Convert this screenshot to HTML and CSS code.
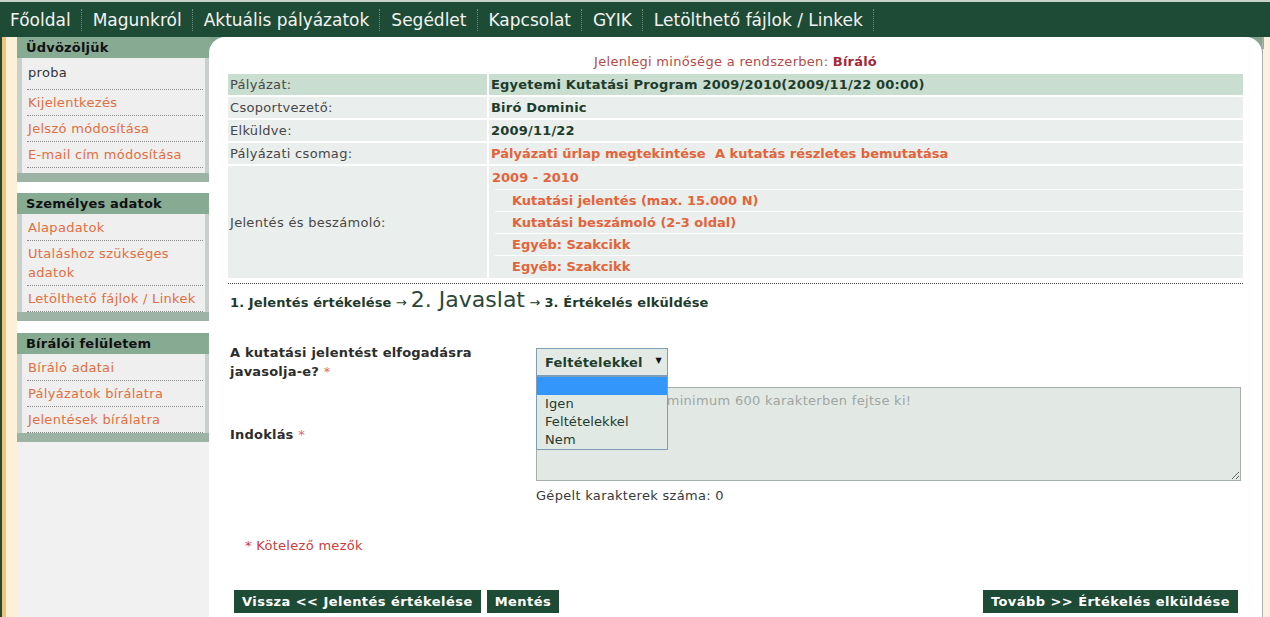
FILE: index.html
```html
<!DOCTYPE html>
<html lang="hu">
<head>
<meta charset="utf-8">
<title>Javaslat</title>
<link rel="stylesheet" href="styles.css">
</head>
<body>
<div class="topline"></div>
<nav class="nav">
  <a href="#">Főoldal</a>
  <a href="#">Magunkról</a>
  <a href="#">Aktuális pályázatok</a>
  <a href="#">Segédlet</a>
  <a href="#">Kapcsolat</a>
  <a href="#">GYIK</a>
  <a href="#">Letölthető fájlok / Linkek</a>
</nav>
<div class="page">
  <aside class="sidebar">
    <section class="box">
      <h3 class="box-head">Üdvözöljük</h3>
      <div class="box-body welcome">
        <p class="user">proba</p>
        <ul>
          <li><a href="#">Kijelentkezés</a></li>
          <li><a href="#">Jelszó módosítása</a></li>
          <li><a href="#">E-mail cím módosítása</a></li>
        </ul>
      </div>
      <div class="box-foot"></div>
    </section>
    <section class="box">
      <h3 class="box-head">Személyes adatok</h3>
      <div class="box-body">
        <ul>
          <li><a href="#">Alapadatok</a></li>
          <li><a href="#">Utaláshoz szükséges adatok</a></li>
          <li><a href="#">Letölthető fájlok / Linkek</a></li>
        </ul>
      </div>
      <div class="box-foot"></div>
    </section>
    <section class="box">
      <h3 class="box-head">Bírálói felületem</h3>
      <div class="box-body">
        <ul>
          <li><a href="#">Bíráló adatai</a></li>
          <li><a href="#">Pályázatok bírálatra</a></li>
          <li><a href="#">Jelentések bírálatra</a></li>
        </ul>
      </div>
      <div class="box-foot"></div>
    </section>
    <div class="sidebar-fill"></div>
  </aside>

  <div class="main-col">
    <main class="main">
      <p class="role">Jelenlegi minősége a rendszerben: <b>Bíráló</b></p>
      <table class="info">
        <tr class="hl">
          <td class="lbl">Pályázat:</td>
          <td class="val">Egyetemi Kutatási Program 2009/2010(2009/11/22 00:00)</td>
        </tr>
        <tr>
          <td class="lbl">Csoportvezető:</td>
          <td class="val">Biró Dominic</td>
        </tr>
        <tr>
          <td class="lbl">Elküldve:</td>
          <td class="val">2009/11/22</td>
        </tr>
        <tr>
          <td class="lbl">Pályázati csomag:</td>
          <td class="val"><a class="olink" href="#">Pályázati űrlap megtekintése</a>&nbsp; <a class="olink" href="#">A kutatás részletes bemutatása</a></td>
        </tr>
        <tr>
          <td class="lbl">Jelentés és beszámoló:</td>
          <td class="val report">
            <div class="year"><a class="olink" href="#">2009 - 2010</a></div>
            <div class="item"><a class="olink" href="#">Kutatási jelentés (max. 15.000 N)</a></div>
            <div class="item"><a class="olink" href="#">Kutatási beszámoló (2-3 oldal)</a></div>
            <div class="item"><a class="olink" href="#">Egyéb: Szakcikk</a></div>
            <div class="item"><a class="olink" href="#">Egyéb: Szakcikk</a></div>
          </td>
        </tr>
      </table>

      <div class="steps">
        <span class="step">1. Jelentés értékelése</span> <span class="arr">→</span> <span class="step-cur">2. Javaslat</span> <span class="arr">→</span> <span class="step">3. Értékelés elküldése</span>
      </div>

      <form class="form">
        <div class="frow">
          <label class="flabel">A kutatási jelentést elfogadásra javasolja-e?&nbsp;<span class="req">*</span></label>
          <div class="field">
            <div class="select">
              <span class="select-val">Feltételekkel</span>
              <span class="select-arrow">▼</span>
              <ul class="options">
                <li class="opt active">&nbsp;</li>
                <li class="opt">Igen</li>
                <li class="opt">Feltételekkel</li>
                <li class="opt">Nem</li>
              </ul>
            </div>
          </div>
        </div>
        <div class="frow">
          <label class="flabel">Indoklás&nbsp;<span class="req">*</span></label>
          <div class="field">
            <textarea class="tarea" placeholder="Kérjük, indoklását minimum 600 karakterben fejtse ki!"></textarea>
          </div>
        </div>
        <div class="frow frow-counter">
          <div class="flabel"></div>
          <div class="field counter">Gépelt karakterek száma: 0</div>
        </div>
        <p class="required-note">* Kötelező mezők</p>
        <div class="buttons">
          <div class="btn-group">
            <button type="button" class="btn">Vissza &lt;&lt; Jelentés értékelése</button>
            <button type="button" class="btn">Mentés</button>
          </div>
          <button type="button" class="btn">Tovább &gt;&gt; Értékelés elküldése</button>
        </div>
      </form>
    </main>
  </div>
  <div class="right-edge"></div>
</div>
</body>
</html>
```

FILE: styles.css
```css
* { box-sizing: border-box; }

html, body {
  margin: 0;
  padding: 0;
}

body {
  font-family: "DejaVu Sans", Verdana, sans-serif;
  font-size: 13px;
  letter-spacing: 0.3px;
  color: #333;
  background: #fcf0d9;
  height: 617px;
  overflow: hidden;
}

b, strong { letter-spacing: 0.2px; }

a { text-decoration: none; }

.topline {
  height: 2px;
  background: #c9d3cc;
}

.nav {
  height: 35px;
  background: #1e4b35;
  display: flex;
  align-items: center;
  padding-left: 10px;
}

.nav a {
  color: #f3f3f3;
  font-size: 17px;
  letter-spacing: 0;
  line-height: 22px;
  padding: 0 10px 0 11px;
  border-right: 1px dotted #6e8c7c;
}

.nav a:first-child { padding-left: 0; }

.page {
  display: flex;
  height: 580px;
  padding-left: 17px;
  background: linear-gradient(to right, #1e4b35 0 2px, #f0c57a 2px 6px, #fcf0d9 6px 17px);
}

/* Sidebar */
.sidebar {
  width: 192px;
  flex: none;
  display: flex;
  flex-direction: column;
  background: #fff;
}

.box { margin-bottom: 11px; }
.box:nth-child(2) { margin-bottom: 12px; }
.box:nth-child(3) { margin-bottom: 0; }

.box-head {
  margin: 0;
  height: 21px;
  line-height: 21px;
  padding-left: 9px;
  background: #87aa93;
  color: #111;
  font-size: 13px;
  font-weight: bold;
  letter-spacing: 0.2px;
}

.box-body {
  background: #efefef;
  border-left: 5px solid #c7d0ca;
  border-right: 4px solid #c7d0ca;
  padding-top: 1px;
}

.box-body.welcome { padding-top: 0; padding-bottom: 5px; }

.box-body ul {
  list-style: none;
  margin: 0;
  padding: 0;
}

.box-body li,
.user {
  margin: 0 2px 0 5px;
  padding: 3px 0 3px 1px;
  line-height: 19px;
  border-bottom: 1px dotted #8a8a8a;
}

.user {
  color: #333;
  padding-top: 5px;
  padding-bottom: 7px;
}

.box-body a { color: #e26e40; }

.box-foot {
  height: 9px;
  background: #9db3a5;
}

.sidebar-fill {
  flex: 1;
  background: #f1f1f1;
}

/* Main */
.main-col {
  flex: 1;
  min-width: 0;
  background: linear-gradient(#7fa38c, #8eb09a) top left / 100% 20px no-repeat;
}

.main {
  background: #fff;
  height: 100%;
  border-radius: 16px 16px 0 0;
  padding: 16px 17px 0 17px;
}

.role {
  margin: 0 0 2px;
  text-align: center;
  line-height: 17px;
  color: #b34a48;
}

.role b { color: #a3283a; }

.info {
  width: 100%;
  border-collapse: separate;
  border-spacing: 2px;
}

.info td {
  background: #eaeeec;
  height: 21px;
  line-height: 21px;
  padding: 0 2px;
  vertical-align: middle;
}

.info tr.hl td { background: #c9ddd0; }

.info .lbl {
  width: 259px;
  color: #474747;
}

.info .val {
  font-weight: bold;
  letter-spacing: 0.2px;
  color: #1d3b2b;
}

.olink { color: #e2643a; font-weight: bold; letter-spacing: 0; }

.info .report {
  padding: 1px 0;
}

.report .year {
  height: 22px;
  line-height: 22px;
  padding-left: 3px;
}

.report .item {
  height: 22px;
  line-height: 21px;
  padding-left: 17px;
  border-top: 1px solid #fff;
  margin-left: 6px;
}

.report .item:first-of-type { border-top-color: transparent; }

.steps {
  margin: 3px 2px 0;
  border-top: 1px dotted #444;
  padding: 2px 2px 0;
  line-height: 28px;
  color: #1e3a2c;
  letter-spacing: 0.1px;
}

.step { font-weight: bold; }
.arr { font-size: 13px; }

.step-cur {
  font-size: 22px;
  letter-spacing: 0;
  color: #2a473a;
}

/* Form */
.form {
  margin: 26px 2px 0;
}

.frow {
  display: flex;
  align-items: center;
  margin-bottom: 6px;
}

.flabel {
  width: 308px;
  flex: none;
  padding-left: 2px;
  padding-right: 40px;
  font-weight: bold;
  letter-spacing: 0.2px;
  color: #2d2d2d;
  line-height: 19px;
}

.req { color: #e36a6a; font-weight: normal; }

.field { flex: 1; }

.select {
  position: relative;
  width: 132px;
  height: 28px;
  background: #e3eae6;
  border: 1px solid #7f9db9;
  display: flex;
  align-items: center;
  padding-left: 8px;
}

.select-val {
  font-weight: bold;
  letter-spacing: 0.2px;
  color: #1f3d2c;
}

.select-arrow {
  position: absolute;
  right: 5px;
  top: 7px;
  font-size: 8px;
  color: #111;
}

.options {
  position: absolute;
  z-index: 5;
  left: -1px;
  top: 27px;
  width: 132px;
  margin: 0;
  padding: 0;
  list-style: none;
  background: #e1e9e4;
  border: 1px solid #7f9db9;
}

.opt {
  height: 18px;
  line-height: 18px;
  padding-left: 8px;
  color: #1e3a2c;
  letter-spacing: 0.1px;
}

.opt.active { background: #3296fb; }

.tarea {
  display: block;
  width: 705px;
  height: 94px;
  margin: 0;
  background: #e2e9e5;
  border: 1px solid #a6aeaa;
  padding: 5px 4px;
  font-family: "DejaVu Sans", Verdana, sans-serif;
  font-size: 13px;
  letter-spacing: 0.3px;
  line-height: 16px;
  color: #333;
}

.tarea::placeholder { color: #a0a5a2; }

.frow-counter { margin-top: 7px; }

.counter {
  line-height: 16px;
  color: #3a3a3a;
}

.required-note {
  margin: 34px 0 0;
  padding-left: 17px;
  line-height: 16px;
  color: #cc3b3b;
}

.buttons {
  margin-top: 36px;
  display: flex;
  justify-content: space-between;
  padding: 0 5px 0 6px;
}

.btn-group {
  display: flex;
  gap: 6px;
}

.btn {
  height: 23px;
  border: 0;
  padding: 0 8px;
  background: #1e4b35;
  color: #fff;
  font-family: "DejaVu Sans", Verdana, sans-serif;
  font-size: 13px;
  font-weight: bold;
  letter-spacing: 0.45px;
  cursor: pointer;
}

.right-edge {
  width: 8px;
  flex: none;
  background: linear-gradient(#8eb09a, #8eb09a) top left / 1px 12px no-repeat, #fbf1de;
  border-left: 1px solid #a9b2aa;
}
```
